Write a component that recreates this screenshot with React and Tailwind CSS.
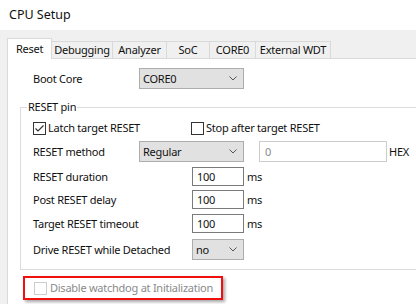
const TABS = [
  { name: 'Debugging', w: 'w-[61px]' },
  { name: 'Analyzer', w: 'w-[54px]' },
  { name: 'SoC', w: 'w-[43px]' },
  { name: 'CORE0', w: 'w-[46px]' },
  { name: 'External WDT', w: 'w-[75px]' },
];

function Chevron() {
  return (
    <svg width="8" height="5" viewBox="0 0 8 5" className="shrink-0">
      <path d="M0.5 0.5 L4 4 L7.5 0.5" stroke="#555" strokeWidth="1" fill="none" />
    </svg>
  );
}

function Combo({ value, w }) {
  return (
    <div className={`flex items-center justify-between h-[21px] border border-[#adadad] bg-[#e1e1e1] pl-[3px] pr-[6px] ${w}`}>
      <span>{value}</span>
      <Chevron />
    </div>
  );
}

function TextBox({ value }) {
  return (
    <div className="flex items-center h-[19px] w-[52px] border border-[#7a7a7a] bg-white pl-[4px]">
      {value}
    </div>
  );
}

function Check({ checked, disabled }) {
  return (
    <div
      className={`w-[13px] h-[13px] shrink-0 border bg-white flex items-center justify-center ${
        disabled ? 'border-[#cccccc]' : 'border-[#333333]'
      }`}
    >
      {checked && (
        <svg width="11" height="11" viewBox="0 0 11 11">
          <path d="M1.5 5.5 L4 8 L9.5 2.5" stroke="#333" strokeWidth="1.2" fill="none" />
        </svg>
      )}
    </div>
  );
}

function MsRow({ label, value, mt }) {
  return (
    <div className={`flex items-center h-[19px] pl-[12px] ${mt}`}>
      <span className="w-[159px]">{label}</span>
      <TextBox value={value} />
      <span className="ml-[3px]">ms</span>
    </div>
  );
}

export default function App() {
  return (
    <div className="w-[416px] h-[304px] overflow-hidden bg-[#f0f0f0] font-['Noto_Sans',sans-serif] text-[11px] text-[#111111] leading-[16px] whitespace-nowrap tracking-[-0.25px]">
      {/* Title */}
      <div className="h-[30px] bg-white flex items-center pl-[9px] text-[12.5px] tracking-normal">CPU Setup</div>

      <div className="pl-[7px] pt-[8px]">
        {/* Tabs */}
        <div className="flex items-end">
          <div className="relative z-10 w-[45px] h-[21px] -mb-px bg-white border-l border-t border-r border-[#d9d9d9] flex justify-center pt-[2px]">
            Reset
          </div>
          {TABS.map(t => (
            <div
              key={t.name}
              className={`h-[17px] border-t border-r border-[#d9d9d9] flex justify-center items-center ${t.w}`}
            >
              {t.name}
            </div>
          ))}
        </div>

        {/* Panel */}
        <div className="w-[430px] h-[260px] bg-white border-l border-t border-[#d9d9d9]">
          <div className="flex items-center h-[21px] mt-[9px] pl-[25px]">
            <span className="w-[106px]">Boot Core</span>
            <Combo value="CORE0" w="w-[105px]" />
          </div>

          {/* RESET pin group */}
          <div className="relative ml-[12px] mt-[18px] w-[420px] h-[163px] border border-[#dcdcdc]">
            <span className="absolute left-[6px] -top-[9px] bg-white px-[1px]">RESET pin</span>

            <div className="flex items-center h-[20px] mt-[10px] pl-[12px]">
              <div className="flex items-center w-[158px]">
                <Check checked />
                <span className="ml-[2px]">Latch target RESET</span>
              </div>
              <Check />
              <span className="ml-[2px]">Stop after target RESET</span>
            </div>

            <div className="flex items-center h-[21px] mt-[3px] pl-[12px]">
              <span className="w-[106px]">RESET method</span>
              <Combo value="Regular" w="w-[105px]" />
              <div className="ml-[15px] w-[128px] h-[21px] border border-[#cccccc] flex items-center pl-[5px] text-[#8a8a8a]">
                0
              </div>
              <span className="ml-[2px]">HEX</span>
            </div>

            <MsRow label="RESET duration" value="100" mt="mt-[5px]" />
            <MsRow label="Post RESET delay" value="100" mt="mt-[4px]" />
            <MsRow label="Target RESET timeout" value="100" mt="mt-[5px]" />

            <div className="flex items-center h-[21px] mt-[6px] pl-[12px]">
              <span className="w-[159px]">Drive RESET while Detached</span>
              <Combo value="no" w="w-[52px]" />
            </div>
          </div>

          {/* Highlighted option */}
          <div className="ml-[15px] mt-[6px] w-[200px] h-[24px] border-2 border-[#f20f0f] shadow-[2px_2px_3px_rgba(0,0,0,0.35)] flex items-center pl-[9px]">
            <Check disabled />
            <span className="ml-[3px] text-[#8a8a8a]">Disable watchdog at Initialization</span>
          </div>
        </div>
      </div>
    </div>
  );
}
